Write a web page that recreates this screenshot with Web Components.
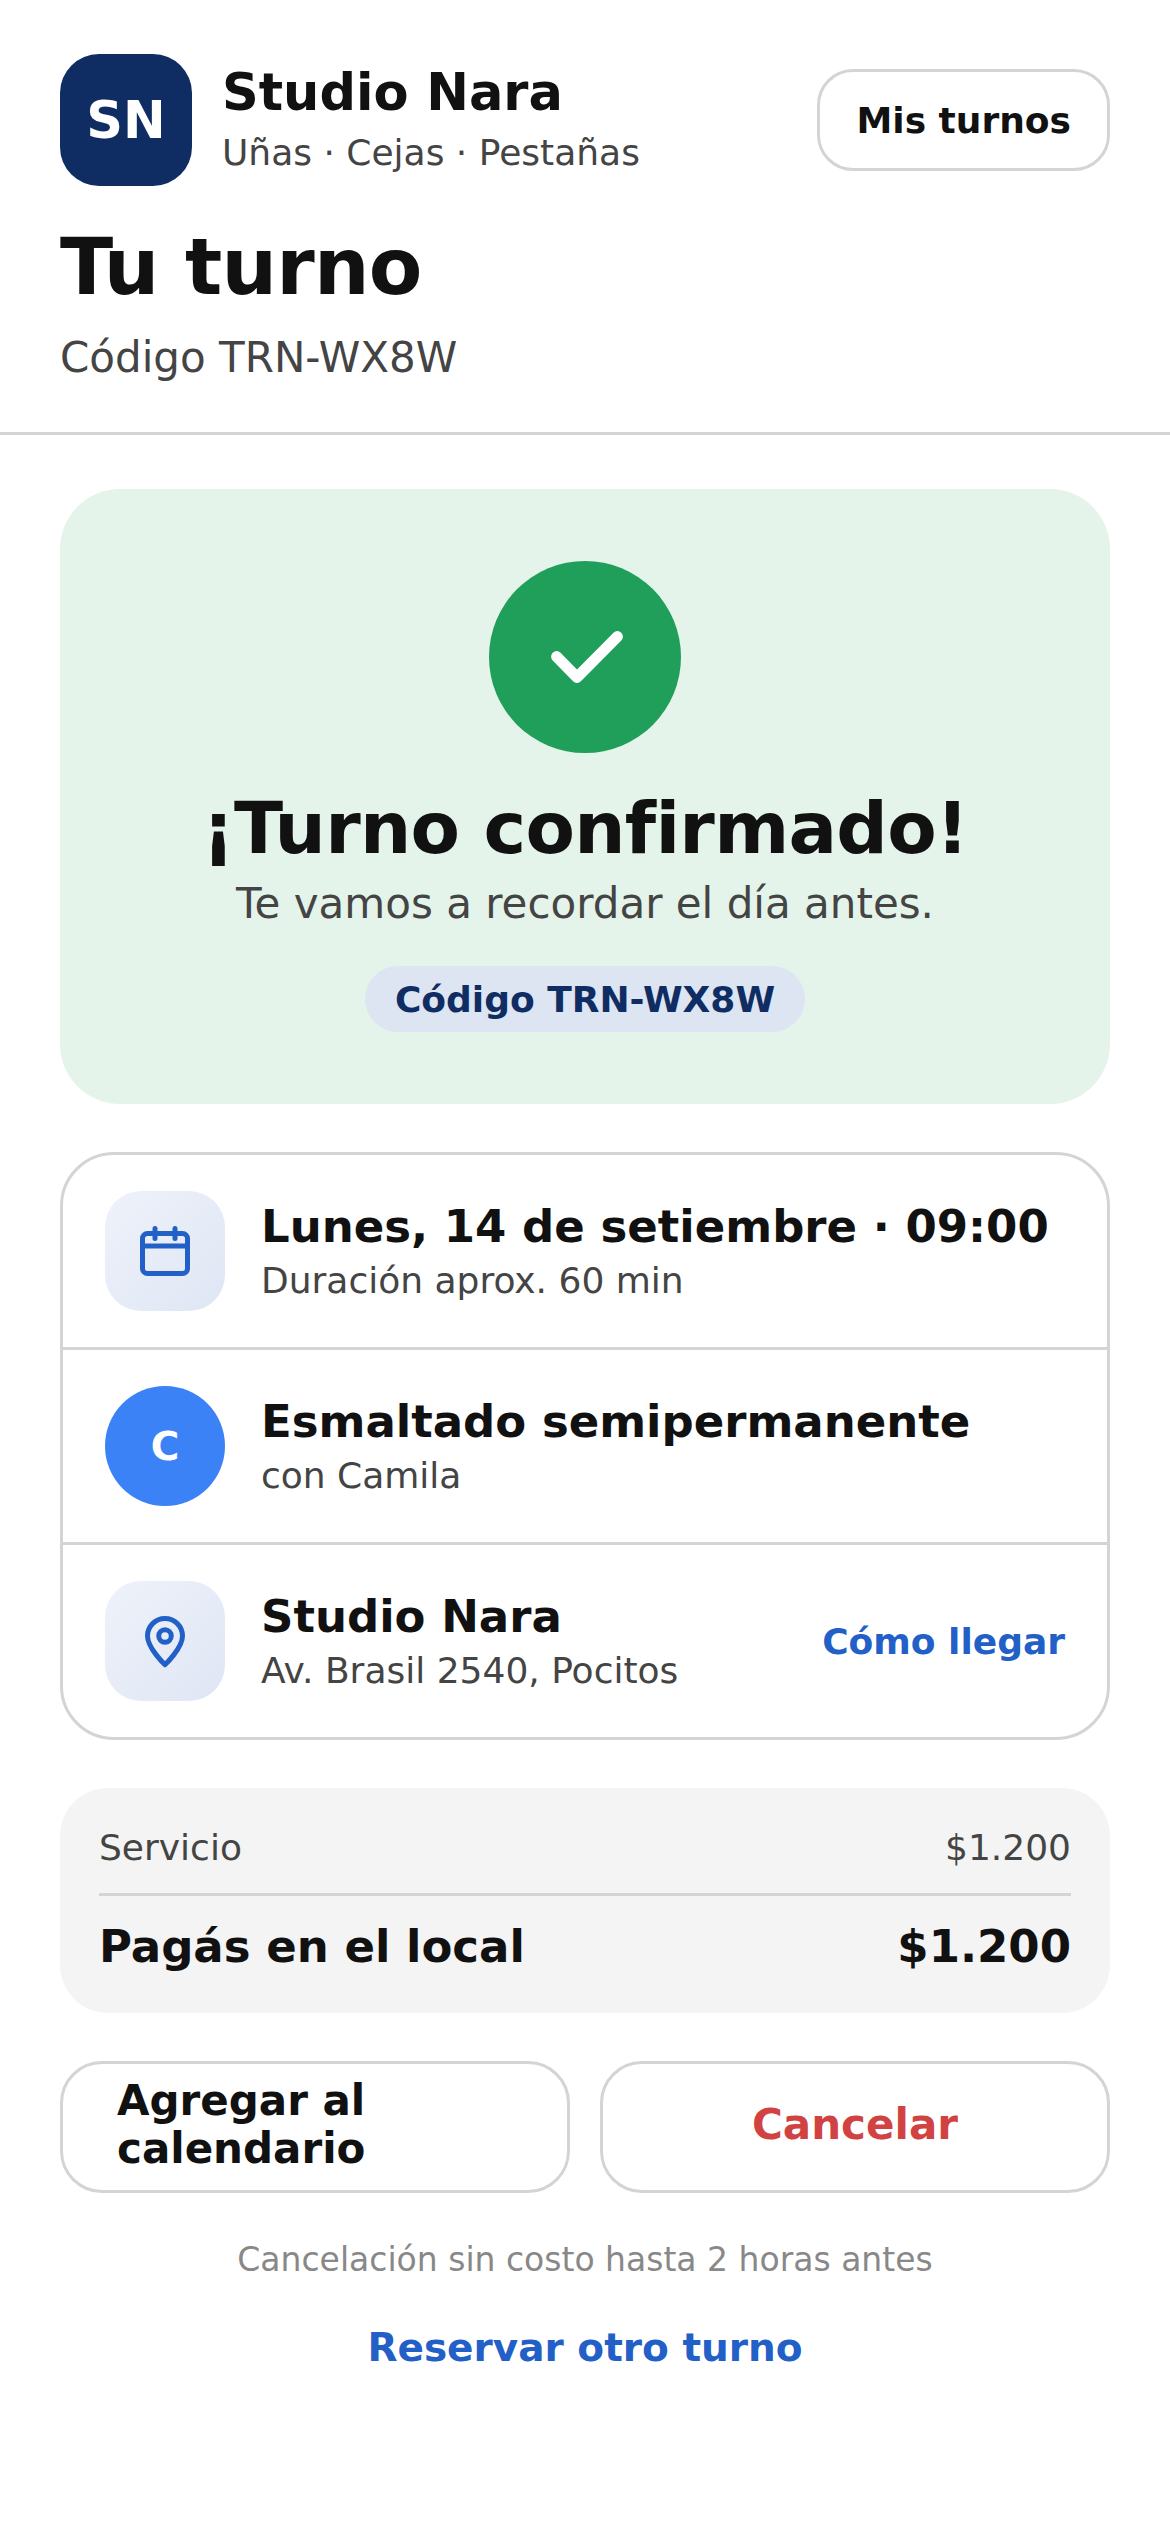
<!DOCTYPE html>
<html lang="es">
<head>
<meta charset="utf-8">
<title>Tu turno</title>
<style>
html, body { margin: 0; background: #fff; }
body { font-family: "DejaVu Sans", sans-serif; color: #111; }
</style>
</head>
<body>
<turno-header name="Studio Nara" sub="Uñas · Cejas · Pestañas" initials="SN" code="Código TRN-WX8W">Tu turno</turno-header>
<turno-page>
  <turno-success code="Código TRN-WX8W" sub="Te vamos a recordar el día antes.">¡Turno confirmado!</turno-success>
  <turno-details>
    <turno-row icon="calendar" title="Lunes, 14 de setiembre · 09:00" sub="Duración aprox. 60 min"></turno-row>
    <turno-row initial="C" title="Esmaltado semipermanente" sub="con Camila"></turno-row>
    <turno-row icon="pin" title="Studio Nara" sub="Av. Brasil 2540, Pocitos" action="Cómo llegar"></turno-row>
  </turno-details>
  <turno-summary label="Servicio" price="$1.200" total-label="Pagás en el local" total="$1.200"></turno-summary>
  <turno-actions>
    <turno-button>Agregar al calendario</turno-button>
    <turno-button danger>Cancelar</turno-button>
  </turno-actions>
  <turno-footer note="Cancelación sin costo hasta 2 horas antes">Reservar otro turno</turno-footer>
</turno-page>

<script>
const icons = {
  calendar: `<svg width="60" height="60" viewBox="0 0 24 24" fill="none" stroke="#2260c8" stroke-width="2" stroke-linecap="round" stroke-linejoin="round">
    <rect x="3" y="5" width="18" height="16" rx="2"/><path d="M3 10h18M8 3v4M16 3v4"/></svg>`,
  pin: `<svg width="60" height="60" viewBox="0 0 24 24" fill="none" stroke="#2260c8" stroke-width="2" stroke-linecap="round" stroke-linejoin="round">
    <path d="M12 21.5s7-6.700 7-11.500a7 7 0 1 0-14 0c0 4.800 7 11.500 7 11.500z"/><circle cx="12" cy="10" r="2.500"/></svg>`
}

class TurnoHeader extends HTMLElement {
  constructor() {
    super()
    const shadow = this.attachShadow({ mode: 'open' })
    shadow.innerHTML = `
    <style>
    :host { display:block; padding:54px 60px 0; height:378px; border-bottom:3px solid #d4d4d4; }
    .top { display:flex; align-items:center; gap:30px; }
    .logo { width:132px; height:132px; border-radius:39px; background:#0f2d63; color:#fff; font-weight:700; font-size:51px;
      display:flex; align-items:center; justify-content:center; flex:none; }
    .brand { flex:1; }
    .name { font-size:51px; font-weight:700; line-height:66px; }
    .sub { font-size:36px; line-height:54px; color:#444; }
    .btn { font-size:36px; font-weight:700; border:3px solid #d4d4d4; border-radius:36px; padding:0 36px; height:102px;
      display:flex; align-items:center; box-sizing:border-box; }
    h1 { font-size:78px; line-height:96px; letter-spacing:-0.78px; margin:33px 0 0; font-weight:700; color:#111; }
    .code { font-size:42px; line-height:60px; color:#444; margin-top:13px; }
    </style>
    <div class="top">
      <div class="logo">${this.getAttribute('initials')}</div>
      <div class="brand"><div class="name">${this.getAttribute('name')}</div><div class="sub">${this.getAttribute('sub')}</div></div>
      <div class="btn">Mis turnos</div>
    </div>
    <h1><slot></slot></h1>
    <div class="code">${this.getAttribute('code')}</div>`
  }
}

class TurnoPage extends HTMLElement {
  constructor() {
    super()
    const shadow = this.attachShadow({ mode: 'open' })
    shadow.innerHTML = `
    <style>
    :host { display:flex; flex-direction:column; gap:48px; padding:54px 60px 0; }
    </style>
    <slot></slot>`
  }
}

class TurnoSuccess extends HTMLElement {
  constructor() {
    super()
    const shadow = this.attachShadow({ mode: 'open' })
    shadow.innerHTML = `
    <style>
    :host { display:flex; flex-direction:column; align-items:center; background:#e5f4ea; border-radius:60px; padding:72px 0; }
    .circle { width:192px; height:192px; border-radius:50%; background:#209f5b; display:flex; align-items:center; justify-content:center; }
    h2 { font-size:72px; line-height:86px; letter-spacing:-0.72px; margin:32px 0 0; font-weight:700; color:#111; }
    .sub { font-size:42px; line-height:63px; color:#444; margin-top:1px; }
    .pill { margin-top:31px; font-size:36px; font-weight:700; color:#0f2d63; background:#dde4f2; border-radius:33px; height:66px;
      padding:0 30px; display:flex; align-items:center; }
    </style>
    <div class="circle"><svg width="96" height="96" viewBox="0 0 24 24" fill="none" stroke="#fff" stroke-width="2.750" stroke-linecap="round" stroke-linejoin="round"><path d="M4.900 11.900l5.100 5.200L20.100 6.900"/></svg></div>
    <h2><slot></slot></h2>
    <div class="sub">${this.getAttribute('sub')}</div>
    <div class="pill">${this.getAttribute('code')}</div>`
  }
}

class TurnoDetails extends HTMLElement {
  constructor() {
    super()
    const shadow = this.attachShadow({ mode: 'open' })
    shadow.innerHTML = `
    <style>
    :host { display:flex; flex-direction:column; border:3px solid #d4d4d4; border-radius:54px; }
    </style>
    <slot></slot>`
  }
}

class TurnoRow extends HTMLElement {
  constructor() {
    super()
    const shadow = this.attachShadow({ mode: 'open' })
    const initial = this.getAttribute('initial')
    const action = this.getAttribute('action')
    const badge = initial
      ? `<div class="badge avatar">${initial}</div>`
      : `<div class="badge">${icons[this.getAttribute('icon')]}</div>`
    shadow.innerHTML = `
    <style>
    :host { display:flex; align-items:center; gap:36px; height:192px; padding:0 42px; box-sizing:border-box; }
    :host(:not(:last-child)) { height:195px; border-bottom:3px solid #d4d4d4; }
    .badge { width:120px; height:120px; border-radius:36px; flex:none; display:flex; align-items:center; justify-content:center;
      background:linear-gradient(135deg,#eef2fa,#dfe6f4); }
    .avatar { border-radius:50%; background:#3b82f6; color:#fff; font-size:39px; font-weight:700; }
    .text { flex:1; min-width:0; }
    .title { font-size:45px; line-height:59px; font-weight:700; color:#111; white-space:nowrap; }
    .sub { font-size:36px; line-height:49px; color:#444; }
    .action { font-size:36px; font-weight:700; color:#2260c8; }
    </style>
    ${badge}
    <div class="text"><div class="title">${this.getAttribute('title')}</div><div class="sub">${this.getAttribute('sub')}</div></div>
    ${action ? `<div class="action">${action}</div>` : ''}`
  }
}

class TurnoSummary extends HTMLElement {
  constructor() {
    super()
    const shadow = this.attachShadow({ mode: 'open' })
    shadow.innerHTML = `
    <style>
    :host { display:block; background:#f4f4f4; border-radius:48px; padding:36px 39px 39px; }
    .line { display:flex; justify-content:space-between; }
    .small { font-size:36px; line-height:48px; color:#444; padding-bottom:21px; border-bottom:3px solid #d4d4d4; }
    .big { font-size:45px; line-height:54px; font-weight:700; color:#111; margin-top:24px; }
    </style>
    <div class="line small"><span>${this.getAttribute('label')}</span><span>${this.getAttribute('price')}</span></div>
    <div class="line big"><span>${this.getAttribute('total-label')}</span><span>${this.getAttribute('total')}</span></div>`
  }
}

class TurnoActions extends HTMLElement {
  constructor() {
    super()
    const shadow = this.attachShadow({ mode: 'open' })
    shadow.innerHTML = `
    <style>
    :host { display:grid; grid-template-columns:1fr 1fr; gap:30px; }
    </style>
    <slot></slot>`
  }
}

class TurnoButton extends HTMLElement {
  constructor() {
    super()
    const shadow = this.attachShadow({ mode: 'open' })
    shadow.innerHTML = `
    <style>
    :host { display:flex; align-items:center; justify-content:center; height:132px; box-sizing:border-box; border:3px solid #d4d4d4; border-radius:42px;
      padding:0 54px 5px; font-size:42px; line-height:48px; font-weight:700; color:#111; background:#fff; }
    :host([danger]) { color:#d14343; }
    span { flex:0 1 auto; }
    </style>
    <span><slot></slot></span>`
  }
}

class TurnoFooter extends HTMLElement {
  constructor() {
    super()
    const shadow = this.attachShadow({ mode: 'open' })
    shadow.innerHTML = `
    <style>
    :host { display:flex; flex-direction:column; align-items:center; }
    .note { font-size:33px; line-height:37px; color:#888; }
    .link { font-size:39px; line-height:48px; font-weight:700; color:#2260c8; margin-top:46px; }
    </style>
    <div class="note">${this.getAttribute('note')}</div>
    <div class="link"><slot></slot></div>`
  }
}

customElements.define('turno-header', TurnoHeader)
customElements.define('turno-page', TurnoPage)
customElements.define('turno-success', TurnoSuccess)
customElements.define('turno-details', TurnoDetails)
customElements.define('turno-row', TurnoRow)
customElements.define('turno-summary', TurnoSummary)
customElements.define('turno-actions', TurnoActions)
customElements.define('turno-button', TurnoButton)
customElements.define('turno-footer', TurnoFooter)
</script>
</body>
</html>
